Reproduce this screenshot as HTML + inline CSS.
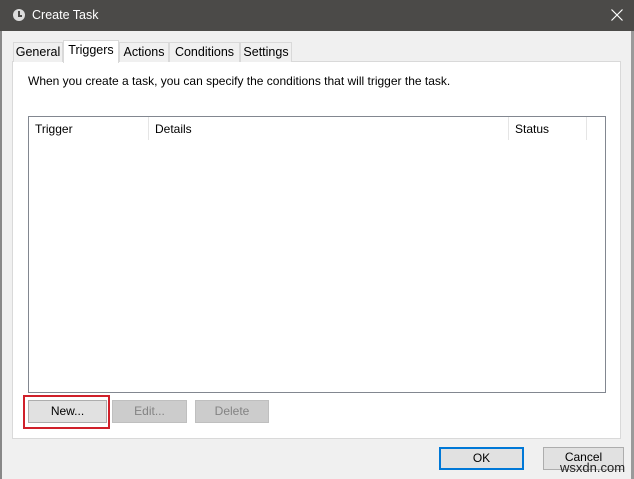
<html><head><style>
body{margin:0;width:634px;height:479px;background:#f0f0f0;font-family:"Liberation Sans",sans-serif;font-size:12px;color:#000;position:relative;overflow:hidden}
div{position:absolute;box-sizing:border-box}
.btn{background:#e1e1e1;border:1px solid #adadad;text-align:center;line-height:21px}
.dis{background:#cccccc;border:1px solid #bfbfbf;color:#838383}
.tab{top:42px;height:20px;border:1px solid #d9d9d9;border-bottom:none;background:#f0f0f0;line-height:19px;text-align:center;font-size:12.5px}
</style></head><body>
<div style="left:0;top:0;width:634px;height:31px;background:#4b4a48"></div>
<div style="left:13px;top:9px;width:12px;height:12px;border-radius:50%;background:#ddd"></div>
<div style="left:18px;top:11px;width:2px;height:5px;background:#4b4a48"></div>
<div style="left:18px;top:15px;width:4px;height:2px;background:#4b4a48"></div>
<div style="left:32px;top:8px;color:#fff;font-size:12.5px">Create Task</div>
<svg style="position:absolute;left:611px;top:9px" width="12" height="12"><path d="M0.5 0.5L11.5 11.5M11.5 0.5L0.5 11.5" stroke="#fff" stroke-width="1.2"/></svg>
<div style="left:0;top:31px;width:2px;height:448px;background:#888"></div>
<div style="left:631px;top:31px;width:3px;height:448px;background:#9a9a9a"></div>
<div style="left:12px;top:61px;width:609px;height:378px;background:#fff;border:1px solid #d9d9d9"></div>
<div class="tab" style="left:13px;width:50px">General</div>
<div class="tab" style="left:63px;top:40px;height:23px;width:56px;background:#fff">Triggers</div>
<div class="tab" style="left:119px;width:50px">Actions</div>
<div class="tab" style="left:169px;width:71px">Conditions</div>
<div class="tab" style="left:240px;width:52px">Settings</div>
<div style="left:28px;top:74px">When you create a task, you can specify the conditions that will trigger the task.</div>
<div style="left:28px;top:116px;width:578px;height:277px;border:1px solid #828790;background:#fff"></div>
<div style="left:35px;top:122px">Trigger</div>
<div style="left:148px;top:117px;width:1px;height:23px;background:#e5e5e5"></div>
<div style="left:155px;top:122px">Details</div>
<div style="left:508px;top:117px;width:1px;height:23px;background:#e5e5e5"></div>
<div style="left:515px;top:122px">Status</div>
<div style="left:586px;top:117px;width:1px;height:23px;background:#e5e5e5"></div>
<div style="left:23px;top:395px;width:87px;height:34px;border:2px solid #d0202a"></div>
<div class="btn" style="left:28px;top:400px;width:79px;height:23px">New...</div>
<div class="btn dis" style="left:112px;top:400px;width:75px;height:23px">Edit...</div>
<div class="btn dis" style="left:195px;top:400px;width:74px;height:23px">Delete</div>
<div class="btn" style="left:439px;top:447px;width:85px;height:23px;border:2px solid #0078d7;line-height:19px">OK</div>
<div class="btn" style="left:543px;top:447px;width:81px;height:23px;line-height:18px">Cancel</div>
<div style="left:560px;top:460px;font-size:13px;color:#222">wsxdn.com</div>
</body></html>
